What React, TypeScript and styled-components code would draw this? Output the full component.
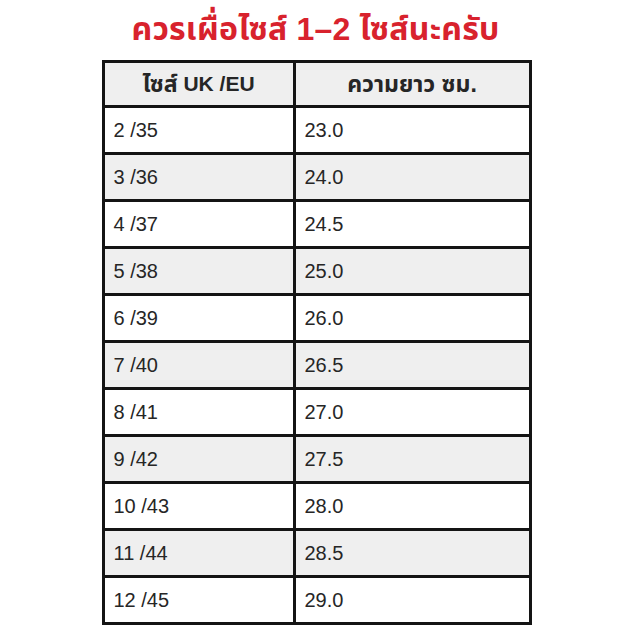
import React from 'react';
import styled, { createGlobalStyle } from 'styled-components';

const GlobalStyle = createGlobalStyle`
  html, body {
    margin: 0;
    padding: 0;
    background: #ffffff;
  }
  body {
    font-family: 'Liberation Sans', 'Noto Sans Thai', 'Noto Sans', sans-serif;
  }
`;

const Page = styled.div`
  width: 627px;
  height: 627px;
  display: flex;
  flex-direction: column;
  align-items: center;
  overflow: hidden;
`;

const Title = styled.h1`
  margin: 0;
  height: 60px;
  display: flex;
  align-items: center;
  justify-content: center;
  padding-left: 4px;
  font-size: 32px;
  font-weight: bold;
  color: #d8222d;
  letter-spacing: 0.2px;
`;

const Table = styled.div`
  width: 424px;
  margin-left: 6px;
  display: grid;
  grid-template-columns: 188px 1fr;
  grid-template-rows: 42px;
  grid-auto-rows: 44px;
  gap: 3px;
  padding: 3px;
  background: #141414;
`;

const Cell = styled.div<{ $shade?: boolean; $head?: boolean }>`
  display: flex;
  align-items: center;
  justify-content: ${(p) => (p.$head ? 'center' : 'flex-start')};
  padding-left: ${(p) => (p.$head ? '0' : '9px')};
  background: ${(p) => (p.$shade ? '#efefef' : '#ffffff')};
  font-size: ${(p) => (p.$head ? '21px' : '20px')};
  font-weight: ${(p) => (p.$head ? 'bold' : 'normal')};
  color: #262626;
  white-space: pre;
`;

const Thai = styled.span`
  font-size: 1.1em;
`;

const rows = [
  ['2 /35', '23.0'],
  ['3 /36', '24.0'],
  ['4 /37', '24.5'],
  ['5 /38', '25.0'],
  ['6 /39', '26.0'],
  ['7 /40', '26.5'],
  ['8 /41', '27.0'],
  ['9 /42', '27.5'],
  ['10 /43', '28.0'],
  ['11 /44', '28.5'],
  ['12 /45', '29.0'],
];

const App = () => {
  return (
    <Page>
      <GlobalStyle />
      <Title>ควรเผื่อไซส์ 1–2 ไซส์นะครับ</Title>
      <Table>
        <Cell $head $shade>
          <Thai>ไซส์</Thai> UK /EU
        </Cell>
        <Cell $head $shade>
          <Thai>ความยาว ซม.</Thai>
        </Cell>
        {rows.map(([size, len], i) => (
          <React.Fragment key={size}>
            <Cell $shade={i % 2 === 1}>{size}</Cell>
            <Cell $shade={i % 2 === 1}>{len}</Cell>
          </React.Fragment>
        ))}
      </Table>
    </Page>
  );
};

export default App;
